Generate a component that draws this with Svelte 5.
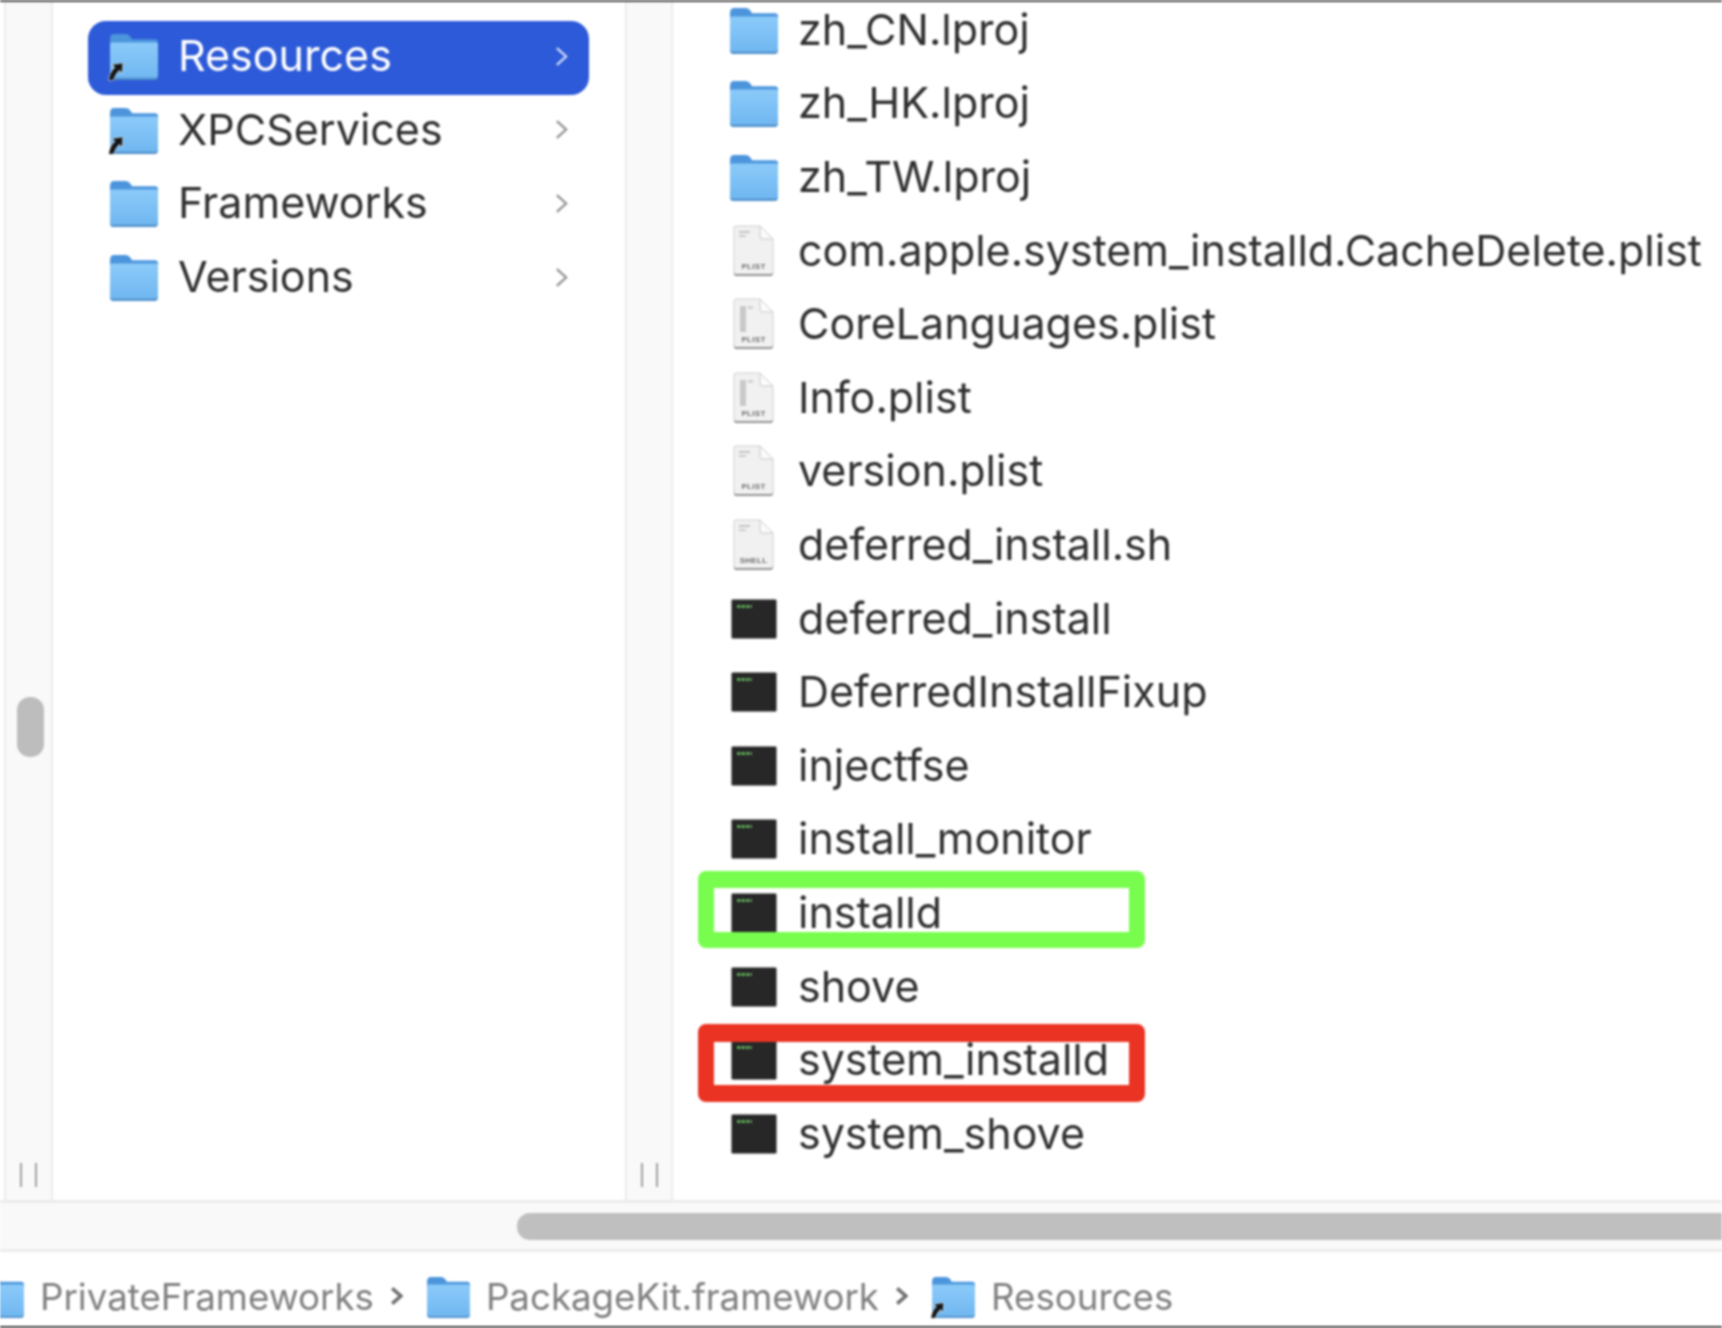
<script lang="ts">
  // Finder column view: sidebar column of folders, file list, path bar.
  const folders = [
    { name: 'Resources', alias: true, selected: true },
    { name: 'XPCServices', alias: true },
    { name: 'Frameworks' },
    { name: 'Versions' }
  ];
  const files = [
    { name: 'zh_CN.lproj', kind: 'folder' },
    { name: 'zh_HK.lproj', kind: 'folder' },
    { name: 'zh_TW.lproj', kind: 'folder' },
    { name: 'com.apple.system_installd.CacheDelete.plist', kind: 'doc', tag: 'PLIST', marks: 'top' },
    { name: 'CoreLanguages.plist', kind: 'doc', tag: 'PLIST', marks: 'col' },
    { name: 'Info.plist', kind: 'doc', tag: 'PLIST', marks: 'col' },
    { name: 'version.plist', kind: 'doc', tag: 'PLIST', marks: 'top' },
    { name: 'deferred_install.sh', kind: 'doc', tag: 'SHELL', marks: 'top' },
    { name: 'deferred_install', kind: 'exec' },
    { name: 'DeferredInstallFixup', kind: 'exec' },
    { name: 'injectfse', kind: 'exec' },
    { name: 'install_monitor', kind: 'exec' },
    { name: 'installd', kind: 'exec', box: 'green' },
    { name: 'shove', kind: 'exec' },
    { name: 'system_installd', kind: 'exec', box: 'red' },
    { name: 'system_shove', kind: 'exec' }
  ];
</script>

{#snippet folder(alias = false, cls = '')}
  <svg class="folder {cls}" viewBox="1 1 46 44" aria-hidden="true">
    <path d="M1 6 Q1 1 5 1 H16 Q19 1 21 4 L22 6 H44 Q47 6 47 9 V14 H1 Z" fill="#4c95dd" />
    <path d="M1 11 Q1 9 3 9 H45 Q47 9 47 11 V41 Q47 44 44 44 H4 Q1 44 1 41 Z" fill="url(#fbody)" />
    <path d="M1 40 V41 Q1 45 4 45 H44 Q47 45 47 41 V40 Q47 43 44 43 H4 Q1 43 1 40 Z" fill="#4f8fca" />
    {#if alias}
      <path d="M0 45 Q1 37 6 33 L3.5 30.5 L13 29 L12.5 38 L10 35.5 Q6 39 4 45 Z" fill="#161616" stroke="#eeeeee" stroke-opacity="0.75" stroke-width="1.4" paint-order="stroke" />
    {/if}
  </svg>
{/snippet}

{#snippet doc(tag: string, marks: string)}
  <svg class="doc" viewBox="0 0 41 52" aria-hidden="true">
    <path d="M1 3 Q1 1 3 1 H27 L40 14 V47 Q40 50 38 50 H3 Q1 50 1 47 Z" fill="#f1f1f1" stroke="#d0d0d0" />
    <path d="M1 48 Q1 51 3 51 H38 Q40 51 40 48 V47 Q40 49 38 49 H3 Q1 49 1 47 Z" fill="#949494" />
    <path d="M27 1 V12 Q27 14 29 14 H40 Z" fill="#fbfbfb" stroke="#c9c9c9" />
    {#if marks === 'top'}
      <rect x="6" y="6" width="11" height="2" fill="#c4c4c4" />
      <rect x="6" y="10" width="7" height="2" fill="#cbcbcb" />
    {:else}
      <rect x="7" y="8" width="6" height="26" fill="#c9c9c9" />
      <rect x="15" y="8" width="5" height="3" fill="#d2d2d2" />
    {/if}
    <text x="20.5" y="44" text-anchor="middle" class="tag">{tag}</text>
  </svg>
{/snippet}

{#snippet exec()}
  <svg class="exec" viewBox="0 0 46 40" aria-hidden="true">
    <rect x="0.5" y="0.5" width="45" height="39" rx="1.5" fill="#292929" stroke="#8d8d8d" />
    <rect x="1.5" y="1.5" width="43" height="37" fill="#262726" />
    <path d="M6 7.5 H21" stroke="#5ea556" stroke-width="3" stroke-dasharray="3.5 1" />
  </svg>
{/snippet}

<svg class="defs" aria-hidden="true">
  <defs>
    <linearGradient id="fbody" x1="0" y1="0" x2="0" y2="1">
      <stop offset="0" stop-color="#8ccbfa" />
      <stop offset="1" stop-color="#6fb6f0" />
    </linearGradient>
  </defs>
</svg>

<div class="finder">
  <div class="browser">
    <div class="edge"></div>

    <div class="gutter">
      <div class="vthumb"></div>
      <div class="handle"><i></i><i></i></div>
    </div>

    <div class="col sidebar">
      {#each folders as f}
        <div class="row" class:selected={f.selected}>
          {@render folder(f.alias)}
          <span class="name">{f.name}</span>
          <svg class="chev" viewBox="0 0 14 22" aria-hidden="true"><path d="M2 2 L12 11 L2 20" /></svg>
        </div>
      {/each}
    </div>

    <div class="gutter second">
      <div class="handle"><i></i><i></i></div>
    </div>

    <div class="col list">
      {#each files as f}
        <div class="item">
          <span class="icon">
            {#if f.kind === 'folder'}
              {@render folder(false, 'inlist')}
            {:else if f.kind === 'doc'}
              {@render doc(f.tag ?? '', f.marks ?? '')}
            {:else}
              {@render exec()}
            {/if}
          </span>
          <span class="name">{f.name}</span>
          {#if f.box}<div class="box {f.box}"></div>{/if}
        </div>
      {/each}
    </div>
  </div>

  <div class="hscroll"><div class="hthumb"></div></div>

  <div class="path">
    {@render folder(false, 'crumb first')}
    <span class="crumb">PrivateFrameworks</span>
    <svg class="sep" viewBox="0 0 12 18" aria-hidden="true"><path d="M2 2 L10 9 L2 16" /></svg>
    {@render folder(false, 'crumb')}
    <span class="crumb">PackageKit.framework</span>
    <svg class="sep" viewBox="0 0 12 18" aria-hidden="true"><path d="M2 2 L10 9 L2 16" /></svg>
    {@render folder(true, 'crumb')}
    <span class="crumb">Resources</span>
  </div>
</div>

<style>
  :global(body) { margin: 0; background: #fff; }

  .defs { position: absolute; width: 0; height: 0; }

  .finder {
    width: 1722px; height: 1328px; box-sizing: border-box;
    display: flex; flex-direction: column;
    overflow: hidden;
    background: #fff;
    border-top: 2px solid #4a4a4a;
    border-bottom: 2px solid #3a3a3a;
    font-family: Inter, "Liberation Sans", sans-serif;
    color: #2f2f2f;
    filter: blur(0.8px);
  }

  .browser { height: 1198px; display: flex; flex-shrink: 0; overflow: hidden; }
  .edge { width: 4px; flex-shrink: 0; }

  .gutter {
    width: 45px; flex-shrink: 0;
    display: flex; flex-direction: column; align-items: center;
    background: #f9f9f9;
    border-left: 2px solid #ececec;
    border-right: 2px solid #ececec;
  }
  .gutter.second { width: 44px; }
  .vthumb { width: 27px; height: 60px; margin: 695px 0 0 4px; border-radius: 13px; background: #bdbdbd; }
  .handle { margin-top: auto; margin-bottom: 13px; display: flex; gap: 13px; }
  .handle i { display: block; width: 2px; height: 24px; background: #a0a0a0; }

  .col { flex-shrink: 0; }
  .sidebar { width: 572px; padding-top: 19px; box-sizing: border-box; }

  .row {
    width: 501px; height: 73.6px; margin-left: 35px; box-sizing: border-box;
    display: flex; align-items: center;
    padding: 0 21px 3px 22px;
    border-radius: 18px;
  }
  .row.selected { background: #2d5ad8; color: #fff; }
  .row .name { margin-left: 20px; flex: 1; }
  .name { font-size: 43px; white-space: nowrap; margin-bottom: 2px; }

  .folder { width: 48px; height: 46px; flex-shrink: 0; display: block; overflow: visible; margin-top: 2px; }
  .folder.inlist { margin-left: 2px; }

  .chev { width: 13px; height: 21px; fill: none; stroke: #909090; stroke-width: 2.4; }
  .selected .chev { stroke: #d3def7; }

  .list { flex: 1; margin-top: -9px; min-width: 0; }
  .item { position: relative; height: 73.6px; display: flex; align-items: center; }
  .icon { width: 125px; padding-left: 55px; box-sizing: border-box; flex-shrink: 0; display: flex; }

  .doc { width: 41px; height: 52px; margin-left: 5px; display: block; }
  .tag { font: 700 8px "Liberation Sans", sans-serif; fill: #6f6f6f; letter-spacing: 0.3px; }
  .exec { width: 46px; height: 40px; margin-left: 3px; display: block; }

  /* annotation frames drawn on top of the rows */
  .box {
    position: absolute; left: 25px; top: -5px;
    width: 447px; height: 77px; box-sizing: border-box;
    border-style: solid; border-width: 17px 16px 16px; border-radius: 8px;
  }
  .box.green { border-color: #78fd4e; }
  .box.red { border-color: #ea3323; top: 1px; height: 78px; border-width: 18px 16px 17px; }

  .hscroll {
    height: 52px; flex-shrink: 0; box-sizing: border-box;
    display: flex; align-items: center; padding-left: 517px;
    background: #f9f9f9;
    border-top: 3px solid #ececec;
    border-bottom: 3px solid #ececec;
  }
  .hthumb { flex: 1; height: 27px; margin-right: -20px; border-radius: 13px; background: #bfbfbf; }

  .path {
    flex: 1; display: flex; align-items: center; padding-top: 14px;
    color: #808080; font-size: 36.7px; white-space: nowrap;
  }
  .folder.crumb { width: 43px; height: 41px; }
  .folder.crumb.first { margin-left: -19px; }
  .crumb { margin-left: 16px; }
  .sep { width: 13px; height: 20px; margin: 0 8px 0 16px; fill: none; stroke: #6f6f6f; stroke-width: 3.2; }
</style>
